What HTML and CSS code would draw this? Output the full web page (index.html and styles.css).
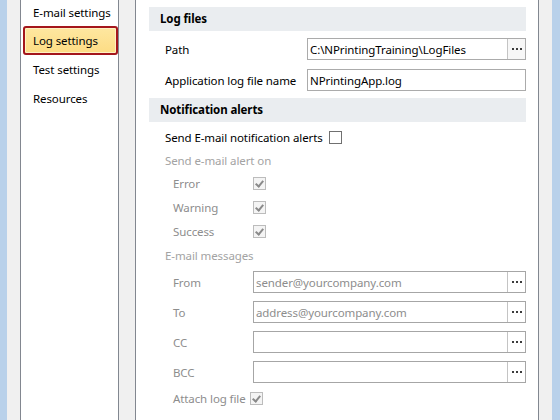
FILE: index.html
```html
<!DOCTYPE html>
<html>
<head>
<meta charset="utf-8">
<link rel="stylesheet" href="styles.css">
</head>
<body>
<div class="frame">
  <div class="edge-blue"></div>
  <div class="gutter-left"></div>
  <nav class="nav">
    <div class="nav-item">E-mail settings</div>
    <div class="nav-item active">Log settings</div>
    <div class="nav-item">Test settings</div>
    <div class="nav-item">Resources</div>
  </nav>
  <div class="gutter-mid"></div>
  <main class="content">
    <div class="section-head">Log files</div>
    <div class="row first">
      <span class="label wide">Path</span>
      <div class="input with-btn"><span class="value">C:\NPrintingTraining\LogFiles</span><span class="dots"><i></i><i></i><i></i></span></div>
    </div>
    <div class="row">
      <span class="label wide">Application log file name</span>
      <div class="input"><span class="value">NPrintingApp.log</span></div>
    </div>

    <div class="section-head notif">Notification alerts</div>
    <div class="line">
      <span class="label">Send E-mail notification alerts</span>
      <span class="check"></span>
    </div>
    <div class="line dim-head short">Send e-mail alert on</div>
    <div class="line sub">
      <span class="label dim col">Error</span>
      <span class="check disabled checked"></span>
    </div>
    <div class="line sub">
      <span class="label dim col">Warning</span>
      <span class="check disabled checked"></span>
    </div>
    <div class="line sub">
      <span class="label dim col">Success</span>
      <span class="check disabled checked"></span>
    </div>
    <div class="line dim-head">E-mail messages</div>
    <div class="mail-row">
      <span class="label dim col">From</span>
      <div class="input with-btn disabled"><span class="value">sender@yourcompany.com</span><span class="dots"><i></i><i></i><i></i></span></div>
    </div>
    <div class="mail-row">
      <span class="label dim col">To</span>
      <div class="input with-btn disabled"><span class="value">address@yourcompany.com</span><span class="dots"><i></i><i></i><i></i></span></div>
    </div>
    <div class="mail-row">
      <span class="label dim col">CC</span>
      <div class="input with-btn disabled"><span class="value"></span><span class="dots"><i></i><i></i><i></i></span></div>
    </div>
    <div class="mail-row">
      <span class="label dim col">BCC</span>
      <div class="input with-btn disabled"><span class="value"></span><span class="dots"><i></i><i></i><i></i></span></div>
    </div>
    <div class="line sub attach">
      <span class="label dim">Attach log file</span>
      <span class="check disabled checked"></span>
    </div>
  </main>
  <div class="gutter-right"></div>
  <div class="edge-blue right"></div>
</div>
</body>
</html>
```

FILE: styles.css
```css
html, body {
  margin: 0;
  padding: 0;
  width: 560px;
  height: 420px;
  overflow: hidden;
  background: #f0f0f0;
  font-family: "Segoe UI", "Noto Sans", "Open Sans", sans-serif;
  font-size: 11.5px;
  letter-spacing: -0.1px;
  color: #000;
}

.frame {
  display: flex;
  height: 420px;
}

.edge-blue {
  width: 7px;
  background: #b9d1ea;
  flex: none;
}
.edge-blue.right { width: 8px; }

.gutter-left { width: 13px; flex: none; background: #f0f0f0; }
.gutter-mid { width: 16px; flex: none; background: #f0f0f0; }
.gutter-right { width: 13px; flex: none; background: #f0f0f0; }

.nav {
  width: 97px;
  flex: none;
  background: #fff;
  border-left: 1px solid #828790;
  border-right: 1px solid #828790;
}

.nav-item {
  height: 29px;
  line-height: 29px;
  padding-left: 12px;
  box-sizing: border-box;
  white-space: nowrap;
}
.nav-item:first-child { height: 26px; line-height: 26px; }

.nav-item.active {
  margin-left: 2px;
  padding-left: 8px;
  line-height: 25px;
  border: 2px solid #a4161c;
  border-radius: 3px;
  background: linear-gradient(#fee7a0, #fddc84);
  box-shadow: inset 0 0 0 1px #fff1c2;
}

.content {
  flex: 1;
  background: #fff;
  border-left: 1px solid #828790;
  border-right: 1px solid #828790;
  padding: 7px 12px 0 13px;
}

.section-head {
  height: 24px;
  line-height: 24px;
  background: #eaedf0;
  padding-left: 11px;
  font-weight: bold;
}
.section-head.notif { margin-top: 7px; margin-bottom: 3px; }

.row {
  display: flex;
  align-items: center;
  height: 22px;
  margin-top: 9px;
  padding-left: 16px;
}
.row.first { margin-top: 7px; }

.label { white-space: nowrap; }
.label.wide { width: 142px; flex: none; }
.label.dim { color: #8d8d8d; }
.label.col { width: 80px; flex: none; }

.input {
  flex: 1;
  height: 22px;
  box-sizing: border-box;
  border: 1px solid #ababab;
  display: flex;
  align-items: center;
  background: #fff;
}
.input .value {
  flex: 1;
  padding-left: 2px;
  white-space: nowrap;
  overflow: hidden;
}
.input.disabled { border-color: #a6a6a6; }
.input.disabled .value { color: #8d8d8d; }

.dots {
  width: 17px;
  height: 20px;
  flex: none;
  border-left: 1px solid #c4c4c4;
  background: #f7f7f7;
  display: flex;
  align-items: center;
  justify-content: center;
  gap: 2px;
}
.dots i {
  width: 2px;
  height: 2px;
  background: #3c3c3c;
  display: block;
}
.input.disabled .dots { background: #fff; }

.line {
  display: flex;
  align-items: center;
  height: 24px;
  padding-left: 16px;
}
.line.short { height: 22px; }
.line .check { margin-left: 6px; }
.line.sub { padding-left: 24px; }
.line.sub .label.col + .check { margin-left: 0; }
.dim-head { color: #a3a3a3; }

.check {
  width: 13px;
  height: 13px;
  box-sizing: border-box;
  border: 1px solid #707070;
  background: #fff;
  flex: none;
  position: relative;
}
.check.disabled {
  border-color: #bcbcbc;
  background: #f4f4f4;
}
.check.checked::after {
  content: "";
  position: absolute;
  left: 3px;
  top: 1px;
  width: 3px;
  height: 6px;
  border-right: 2px solid #8a8a8a;
  border-bottom: 2px solid #8a8a8a;
  transform: rotate(40deg);
}

.mail-row {
  display: flex;
  align-items: center;
  height: 30px;
  padding-left: 24px;
}

.line.attach { height: 22px; }
.line.attach .check { margin-left: 4px; }
```
